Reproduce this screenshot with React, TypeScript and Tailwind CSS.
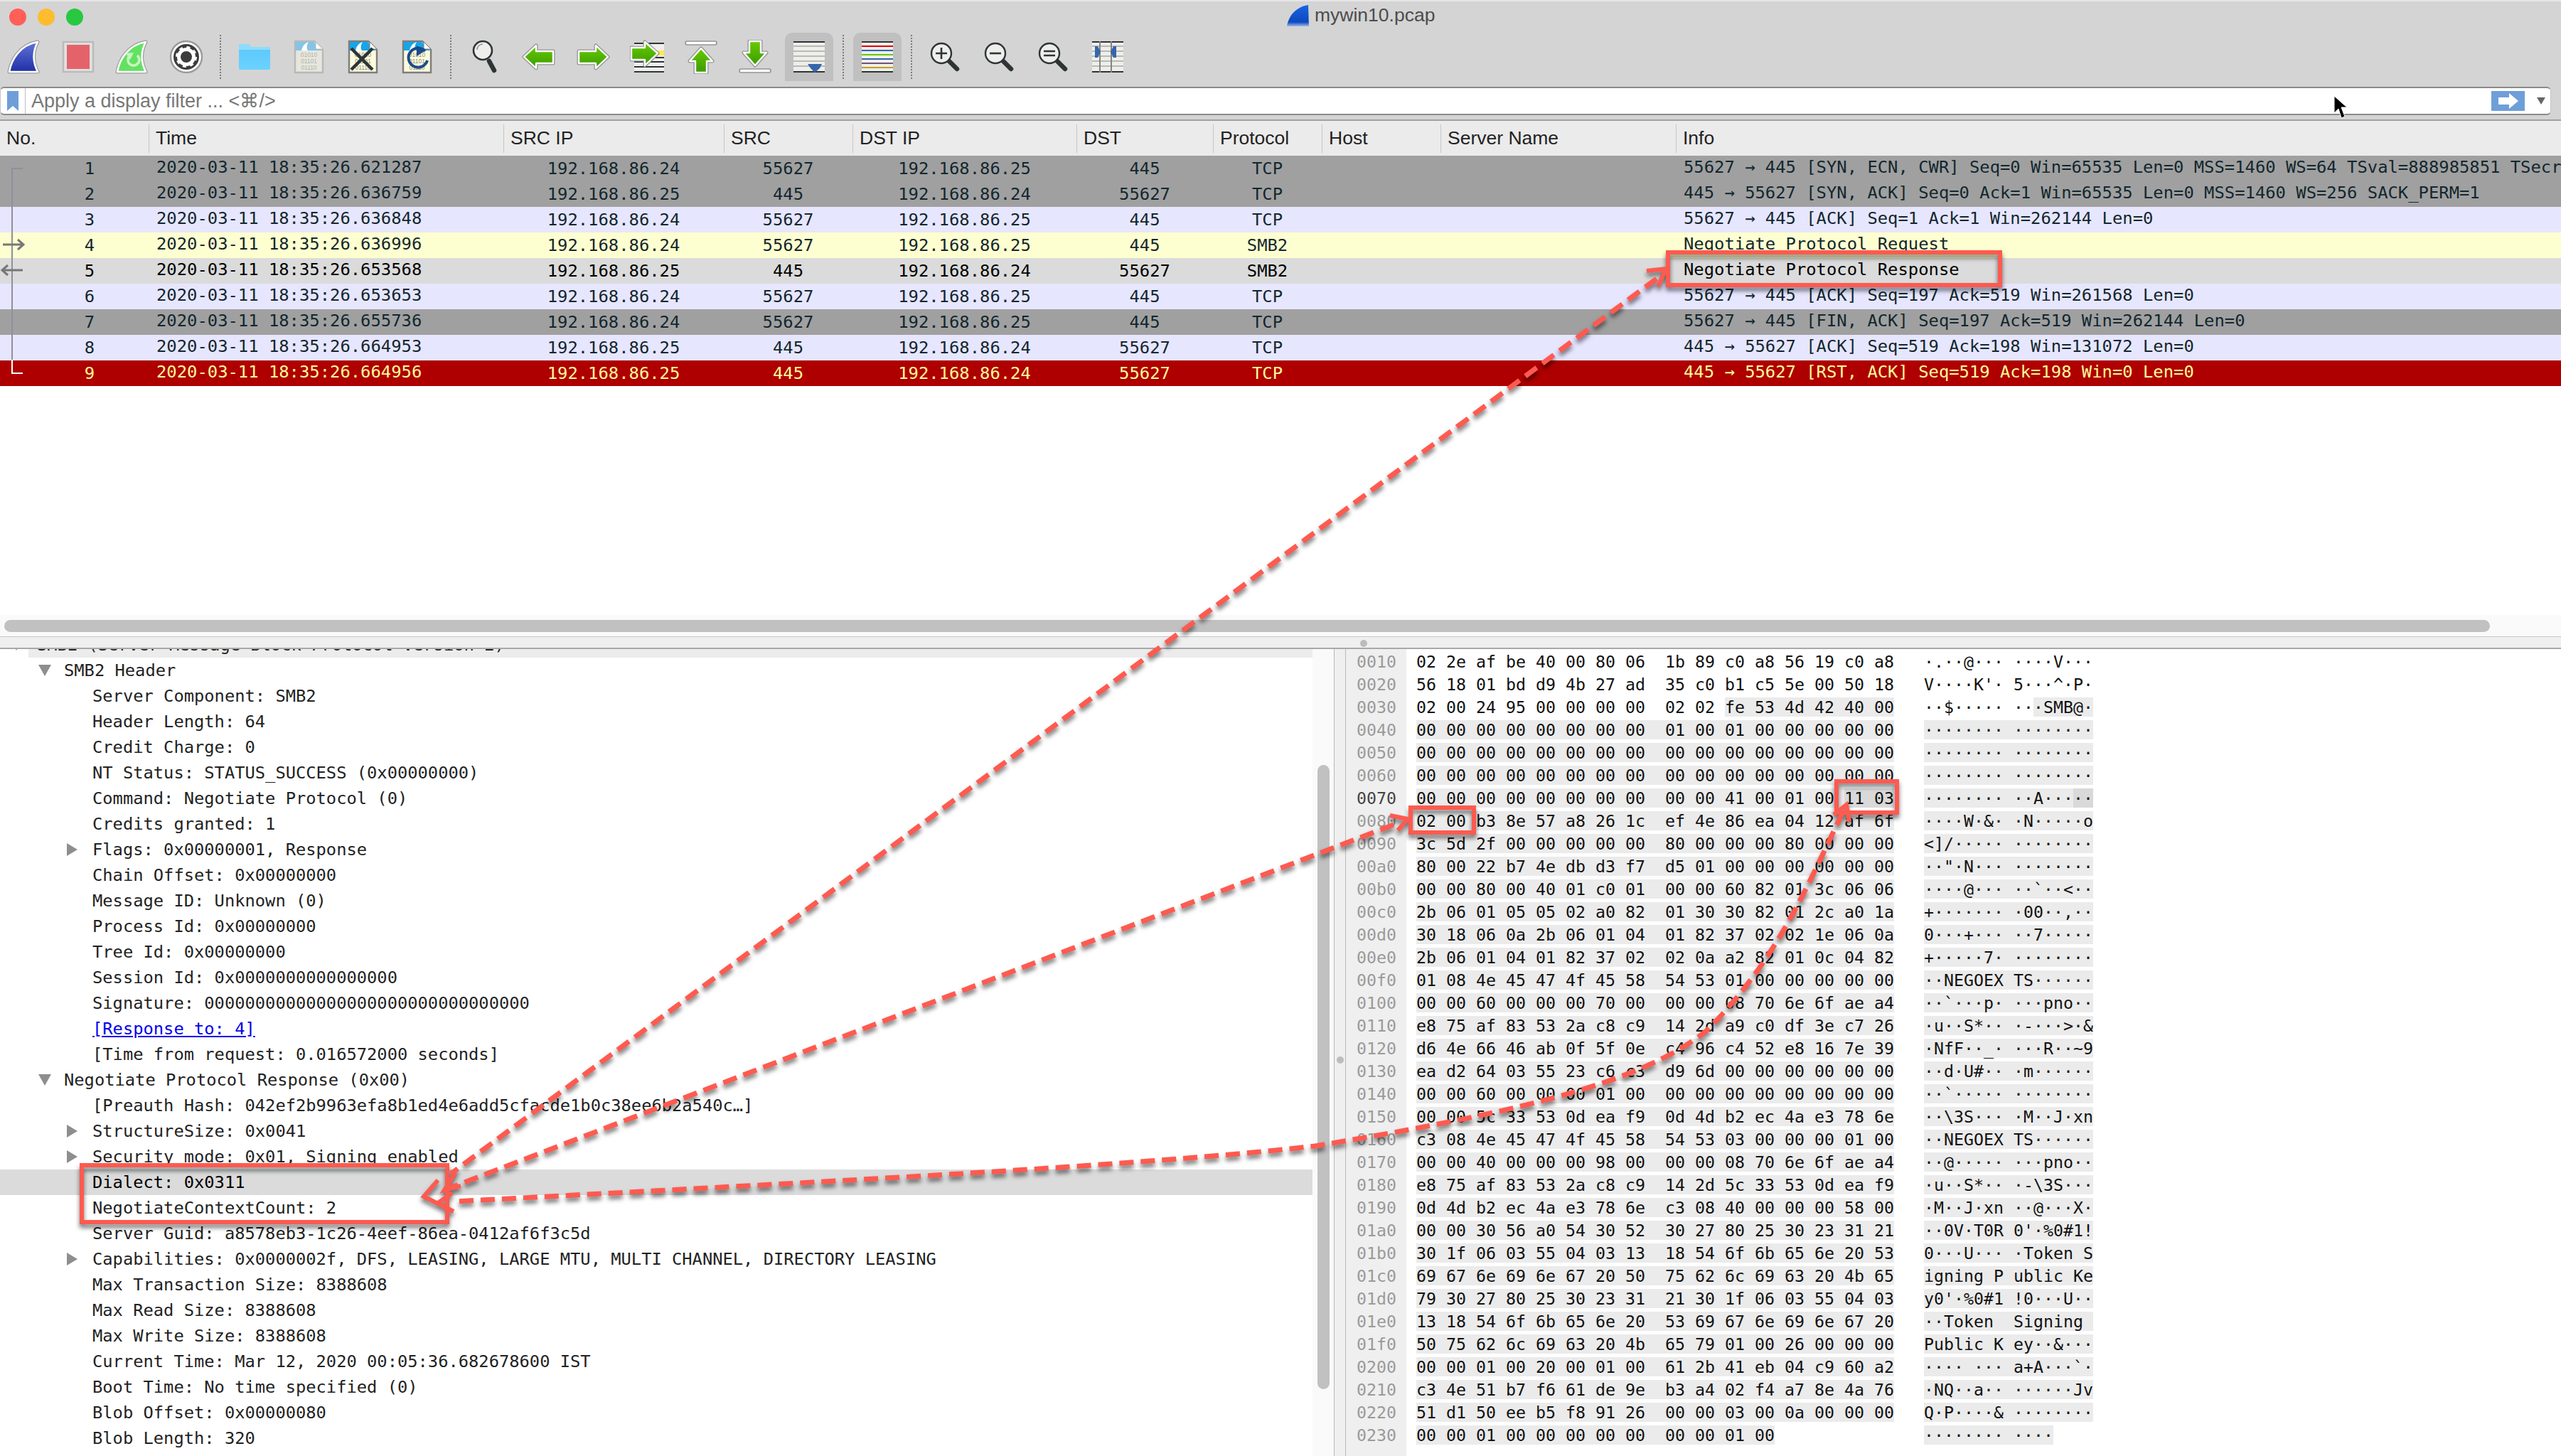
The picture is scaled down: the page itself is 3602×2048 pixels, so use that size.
import type { ReactNode } from "react";

const MONO = "[font-family:'DejaVu_Sans_Mono',monospace]";
const SANS = "[font-family:'Liberation_Sans',sans-serif]";
const COLS = "grid grid-cols-[209px_499px_310px_181px_315px_192px_153px_167px_331px_minmax(0,1fr)]";

const packets = [
  { no: 1, time: "2020-03-11 18:35:26.621287", src: "192.168.86.24", sp: "55627", dst: "192.168.86.25", dp: "445", proto: "TCP", info: "55627 → 445 [SYN, ECN, CWR] Seq=0 Win=65535 Len=0 MSS=1460 WS=64 TSval=888985851 TSecr=0 SACK_PERM=1", row: "bg-[#a0a0a0] text-[#12272e]" },
  { no: 2, time: "2020-03-11 18:35:26.636759", src: "192.168.86.25", sp: "445", dst: "192.168.86.24", dp: "55627", proto: "TCP", info: "445 → 55627 [SYN, ACK] Seq=0 Ack=1 Win=65535 Len=0 MSS=1460 WS=256 SACK_PERM=1", row: "bg-[#a0a0a0] text-[#12272e]" },
  { no: 3, time: "2020-03-11 18:35:26.636848", src: "192.168.86.24", sp: "55627", dst: "192.168.86.25", dp: "445", proto: "TCP", info: "55627 → 445 [ACK] Seq=1 Ack=1 Win=262144 Len=0", row: "bg-[#e7e6ff] text-[#12272e]" },
  { no: 4, time: "2020-03-11 18:35:26.636996", src: "192.168.86.24", sp: "55627", dst: "192.168.86.25", dp: "445", proto: "SMB2", info: "Negotiate Protocol Request", row: "bg-[#feffd0] text-[#12272e]" },
  { no: 5, time: "2020-03-11 18:35:26.653568", src: "192.168.86.25", sp: "445", dst: "192.168.86.24", dp: "55627", proto: "SMB2", info: "Negotiate Protocol Response", row: "bg-[#dbdbdb] text-black" },
  { no: 6, time: "2020-03-11 18:35:26.653653", src: "192.168.86.24", sp: "55627", dst: "192.168.86.25", dp: "445", proto: "TCP", info: "55627 → 445 [ACK] Seq=197 Ack=519 Win=261568 Len=0", row: "bg-[#e7e6ff] text-[#12272e]" },
  { no: 7, time: "2020-03-11 18:35:26.655736", src: "192.168.86.24", sp: "55627", dst: "192.168.86.25", dp: "445", proto: "TCP", info: "55627 → 445 [FIN, ACK] Seq=197 Ack=519 Win=262144 Len=0", row: "bg-[#a0a0a0] text-[#12272e]" },
  { no: 8, time: "2020-03-11 18:35:26.664953", src: "192.168.86.25", sp: "445", dst: "192.168.86.24", dp: "55627", proto: "TCP", info: "445 → 55627 [ACK] Seq=519 Ack=198 Win=131072 Len=0", row: "bg-[#e7e6ff] text-[#12272e]" },
  { no: 9, time: "2020-03-11 18:35:26.664956", src: "192.168.86.25", sp: "445", dst: "192.168.86.24", dp: "55627", proto: "TCP", info: "445 → 55627 [RST, ACK] Seq=519 Ack=198 Win=0 Len=0", row: "bg-[#ae0000] text-[#fffc9c]" },
];

// level: 0 = 90px text, 1 = 130px text
const tree: { text: string; level: number; caret?: "down" | "right"; link?: boolean; selected?: boolean }[] = [
  { text: "SMB2 Header", level: 0, caret: "down" },
  { text: "Server Component: SMB2", level: 1 },
  { text: "Header Length: 64", level: 1 },
  { text: "Credit Charge: 0", level: 1 },
  { text: "NT Status: STATUS_SUCCESS (0x00000000)", level: 1 },
  { text: "Command: Negotiate Protocol (0)", level: 1 },
  { text: "Credits granted: 1", level: 1 },
  { text: "Flags: 0x00000001, Response", level: 1, caret: "right" },
  { text: "Chain Offset: 0x00000000", level: 1 },
  { text: "Message ID: Unknown (0)", level: 1 },
  { text: "Process Id: 0x00000000", level: 1 },
  { text: "Tree Id: 0x00000000", level: 1 },
  { text: "Session Id: 0x0000000000000000", level: 1 },
  { text: "Signature: 00000000000000000000000000000000", level: 1 },
  { text: "[Response to: 4]", level: 1, link: true },
  { text: "[Time from request: 0.016572000 seconds]", level: 1 },
  { text: "Negotiate Protocol Response (0x00)", level: 0, caret: "down" },
  { text: "[Preauth Hash: 042ef2b9963efa8b1ed4e6add5cfacde1b0c38ee6b2a540c…]", level: 1 },
  { text: "StructureSize: 0x0041", level: 1, caret: "right" },
  { text: "Security mode: 0x01, Signing enabled", level: 1, caret: "right" },
  { text: "Dialect: 0x0311", level: 1, selected: true },
  { text: "NegotiateContextCount: 2", level: 1 },
  { text: "Server Guid: a8578eb3-1c26-4eef-86ea-0412af6f3c5d", level: 1 },
  { text: "Capabilities: 0x0000002f, DFS, LEASING, LARGE MTU, MULTI CHANNEL, DIRECTORY LEASING", level: 1, caret: "right" },
  { text: "Max Transaction Size: 8388608", level: 1 },
  { text: "Max Read Size: 8388608", level: 1 },
  { text: "Max Write Size: 8388608", level: 1 },
  { text: "Current Time: Mar 12, 2020 00:05:36.682678600 IST", level: 1 },
  { text: "Boot Time: No time specified (0)", level: 1 },
  { text: "Blob Offset: 0x00000080", level: 1 },
  { text: "Blob Length: 320", level: 1 },
];

const hexDump = [
  "02 2e af be 40 00 80 06 1b 89 c0 a8 56 19 c0 a8",
  "56 18 01 bd d9 4b 27 ad 35 c0 b1 c5 5e 00 50 18",
  "02 00 24 95 00 00 00 00 02 02 fe 53 4d 42 40 00",
  "00 00 00 00 00 00 00 00 01 00 01 00 00 00 00 00",
  "00 00 00 00 00 00 00 00 00 00 00 00 00 00 00 00",
  "00 00 00 00 00 00 00 00 00 00 00 00 00 00 00 00",
  "00 00 00 00 00 00 00 00 00 00 41 00 01 00 11 03",
  "02 00 b3 8e 57 a8 26 1c ef 4e 86 ea 04 12 af 6f",
  "3c 5d 2f 00 00 00 00 00 80 00 00 00 80 00 00 00",
  "80 00 22 b7 4e db d3 f7 d5 01 00 00 00 00 00 00",
  "00 00 80 00 40 01 c0 01 00 00 60 82 01 3c 06 06",
  "2b 06 01 05 05 02 a0 82 01 30 30 82 01 2c a0 1a",
  "30 18 06 0a 2b 06 01 04 01 82 37 02 02 1e 06 0a",
  "2b 06 01 04 01 82 37 02 02 0a a2 82 01 0c 04 82",
  "01 08 4e 45 47 4f 45 58 54 53 01 00 00 00 00 00",
  "00 00 60 00 00 00 70 00 00 00 08 70 6e 6f ae a4",
  "e8 75 af 83 53 2a c8 c9 14 2d a9 c0 df 3e c7 26",
  "d6 4e 66 46 ab 0f 5f 0e c4 96 c4 52 e8 16 7e 39",
  "ea d2 64 03 55 23 c6 c3 d9 6d 00 00 00 00 00 00",
  "00 00 60 00 00 00 01 00 00 00 00 00 00 00 00 00",
  "00 00 5c 33 53 0d ea f9 0d 4d b2 ec 4a e3 78 6e",
  "c3 08 4e 45 47 4f 45 58 54 53 03 00 00 00 01 00",
  "00 00 40 00 00 00 98 00 00 00 08 70 6e 6f ae a4",
  "e8 75 af 83 53 2a c8 c9 14 2d 5c 33 53 0d ea f9",
  "0d 4d b2 ec 4a e3 78 6e c3 08 40 00 00 00 58 00",
  "00 00 30 56 a0 54 30 52 30 27 80 25 30 23 31 21",
  "30 1f 06 03 55 04 03 13 18 54 6f 6b 65 6e 20 53",
  "69 67 6e 69 6e 67 20 50 75 62 6c 69 63 20 4b 65",
  "79 30 27 80 25 30 23 31 21 30 1f 06 03 55 04 03",
  "13 18 54 6f 6b 65 6e 20 53 69 67 6e 69 6e 67 20",
  "50 75 62 6c 69 63 20 4b 65 79 01 00 26 00 00 00",
  "00 00 01 00 20 00 01 00 61 2b 41 eb 04 c9 60 a2",
  "c3 4e 51 b7 f6 61 de 9e b3 a4 02 f4 a7 8e 4a 76",
  "51 d1 50 ee b5 f8 91 26 00 00 03 00 0a 00 00 00",
  "00 00 01 00 00 00 00 00 00 00 01 00",
];

const tones: Record<string, string> = { none: "", field: "bg-[#ebebeb]", sel: "bg-[#d9d9d9]" };

// merge neighbouring bytes of the same tone into one span
function runs(pieces: string[], tone: (i: number) => string) {
  const out: ReactNode[] = [];
  let buf = "";
  let cur = tone(0);
  pieces.forEach((p, i) => {
    const t = tone(i);
    if (t !== cur) {
      out.push(<span key={i} className={tones[cur]}>{buf}</span>);
      buf = "";
      cur = t;
    }
    buf += p;
  });
  out.push(<span key="end" className={tones[cur]}>{buf}</span>);
  return out;
}

function HexRow({ line, index }: { line: string; index: number }) {
  const base = (index + 1) * 16;
  const bytes = line.split(" ");
  const tone = (i: number) => {
    const addr = base + i;
    if (addr === 0x7e || addr === 0x7f) return "sel";
    return addr >= 0x3a ? "field" : "none";
  };
  const hex = bytes.map((b, i) => (i === bytes.length - 1 ? b : i === 7 ? b + "  " : b + " "));
  const ascii = bytes.map((b, i) => {
    const c = parseInt(b, 16);
    const ch = c >= 32 && c < 127 ? String.fromCharCode(c) : "·";
    return i === 7 ? ch + " " : ch;
  });
  const selected = base === 0x70;
  return (
    <div className={`flex h-[32px] leading-[32px] whitespace-pre text-[23.26px] text-[#111] ${MONO}`}>
      <div className={`w-[85px] pl-[15px] bg-[#efefef] ${selected ? "text-[#444]" : "text-[#9a9a9a]"}`}>
        {base.toString(16).padStart(4, "0")}
      </div>
      <div className="pl-[14px] w-[728px]">{runs(hex, tone)}</div>
      <div>{runs(ascii, tone)}</div>
    </div>
  );
}

function Caret({ dir, className }: { dir: "down" | "right"; className: string }) {
  return dir === "down" ? (
    <svg width="18" height="16" viewBox="0 0 18 16" className={className}>
      <polygon points="0,0 18,0 9,16" fill="#8e8e8e" />
    </svg>
  ) : (
    <svg width="15" height="18" viewBox="0 0 15 18" className={className}>
      <polygon points="0,0 15,9 0,18" fill="#8e8e8e" />
    </svg>
  );
}

function TreeRow({ text, level, caret, link, selected }: (typeof tree)[number]) {
  const caretPos = level === 0 ? "left-[54px] top-[10px]" : "left-[94px] top-[9px]";
  return (
    <div className={`relative h-[36px] leading-[36px] whitespace-nowrap text-[23.75px] ${MONO} ${selected ? "bg-[#dbdbdb] text-black" : "text-[#222]"} ${level === 0 ? "pl-[90px]" : "pl-[130px]"}`}>
      {caret && <Caret dir={caret} className={`absolute ${caretPos}`} />}
      {link ? <span className="text-[#0000ee] underline">{text}</span> : text}
    </div>
  );
}

/* ---------- toolbar icons, all on a 48 box ---------- */

const FIN = "M3 45 C6 28 18 7 43 3 C35 18 37 33 43 45 Z";

function Icon({ children }: { children: ReactNode }) {
  return (
    <svg width="48" height="48" viewBox="0 0 48 48" className="shrink-0">
      {children}
    </svg>
  );
}

function Defs() {
  return (
    <svg width="0" height="0" className="absolute">
      <defs>
        <linearGradient id="finBlue" x1="0" y1="0" x2="0" y2="1">
          <stop offset="0" stopColor="#6274d6" />
          <stop offset="1" stopColor="#1f2fa6" />
        </linearGradient>
        <linearGradient id="titleFin" x1="0" y1="0" x2="0" y2="1">
          <stop offset="0" stopColor="#1b63e0" />
          <stop offset="0.8" stopColor="#0d49c0" />
          <stop offset="1" stopColor="#9db8e8" />
        </linearGradient>
        <linearGradient id="arrowGreen" x1="0" y1="0" x2="0" y2="1">
          <stop offset="0" stopColor="#66cc00" />
          <stop offset="1" stopColor="#3c9a00" />
        </linearGradient>
        <linearGradient id="folderBlue" x1="0" y1="0" x2="0" y2="1">
          <stop offset="0" stopColor="#5bc8fb" />
          <stop offset="1" stopColor="#6ad2ff" />
        </linearGradient>
      </defs>
    </svg>
  );
}

function FinIcon({ fill }: { fill: string }) {
  return (
    <>
      <path d={FIN} fill="none" stroke="#9b9b9b" strokeWidth="5" strokeLinejoin="round" />
      <path d={FIN} fill={fill} stroke="#fff" strokeWidth="2.6" strokeLinejoin="round" />
    </>
  );
}

function Shield({ d, fill = "url(#arrowGreen)" }: { d: string; fill?: string }) {
  return (
    <>
      <path d={d} fill="none" stroke="#949494" strokeWidth="5" strokeLinejoin="round" />
      <path d={d} fill={fill} stroke="#fff" strokeWidth="2.4" strokeLinejoin="round" />
    </>
  );
}

function FileBase({ faded }: { faded?: boolean }) {
  const band = faded ? "#84c4e6" : "#16a5e8";
  const body = faded ? "#e6e6dc" : "#fbfbdc";
  const border = faded ? "#b8b8b8" : "#7d7d7d";
  const digit = faded ? "#b4b4b0" : "#8e8e80";
  return (
    <>
      <path d="M5 2 H32 L44 14 V46 H5 Z" fill={body} stroke={border} strokeWidth="2.4" />
      <path d="M6 3 H31 L43 15 H6 Z" fill={band} />
      <path d="M34 3 L44 13 H34 Z" fill="#fff" stroke={border} strokeWidth="1" />
      <path d="M14 15 C15 10 18 5 24 3 C21 8 21 12 23 15 Z" fill="#fff" />
      <text x="24.5" y="24" textAnchor="middle" fontSize="8.4" fontFamily="Liberation Sans" fill={digit}>01010</text>
      <text x="24.5" y="33" textAnchor="middle" fontSize="8.4" fontFamily="Liberation Sans" fill={digit}>01101</text>
      <text x="24.5" y="42" textAnchor="middle" fontSize="8.4" fontFamily="Liberation Sans" fill={digit}>01110</text>
    </>
  );
}

function Lens({ children }: { children?: ReactNode }) {
  return (
    <>
      <path d="M29 30 L40 41" stroke="#2e3436" strokeWidth="6.5" strokeLinecap="round" />
      <circle cx="18" cy="19" r="14" fill="#eeeeec" stroke="#2e3436" strokeWidth="2.4" />
      {children}
    </>
  );
}

function Lines({ ys, color, x1 = 2, x2 = 46, width = 2 }: { ys: number[]; color: string; x1?: number; x2?: number; width?: number }) {
  return (
    <>
      {ys.map((y) => (
        <line key={y} x1={x1} x2={x2} y1={y} y2={y} stroke={color} strokeWidth={width} />
      ))}
    </>
  );
}

function Sep() {
  return <div className="-mx-[5px] h-[62px] w-[2px] shrink-0 border-l-2 border-dotted border-[#7a7a7a]" />;
}

function Toggled({ children }: { children: ReactNode }) {
  return <div className="-mx-[10px] flex h-[68px] shrink-0 items-center rounded-t-[10px] bg-[#c0c0c0] px-[10px]">{children}</div>;
}

function Toolbar() {
  return (
    <div className="flex h-[68px] items-center gap-[28px] pl-[10px]">
      <Icon><FinIcon fill="url(#finBlue)" /></Icon>
      <Icon>
        <rect x="3" y="3" width="42" height="42" fill="#e0e0e0" stroke="#bababa" strokeWidth="2.4" />
        <rect x="8" y="7" width="32" height="34" fill="#e4636a" />
      </Icon>
      <Icon>
        <FinIcon fill="#62e262" />
        <path d="M31 22 A8 8 0 1 1 19 24" fill="none" stroke="#c8f4c0" strokeWidth="3.6" />
        <polygon points="15,19 26,18 21,28" fill="#c8f4c0" />
      </Icon>
      <Icon>
        <circle cx="24" cy="24" r="22" fill="#fff" stroke="#9a9a9a" strokeWidth="2.4" />
        <circle cx="24" cy="24" r="18" fill="#3c3c3c" />
        <circle cx="24" cy="24" r="10.5" fill="none" stroke="#fff" strokeWidth="5" />
        <circle cx="24" cy="24" r="13.5" fill="none" stroke="#fff" strokeWidth="3" strokeDasharray="5 5.6" />
      </Icon>
      <Sep />
      <Icon>
        <path d="M2 8 Q2 6 4 6 H15 L19 10 H44 Q46 10 46 12 V40 Q46 42 44 42 H4 Q2 42 2 40 Z" fill="url(#folderBlue)" />
        <path d="M2 8 Q2 6 4 6 H15 L19 10 H46 V14 H2 Z" fill="#8edcfd" />
      </Icon>
      <Icon><FileBase faded /></Icon>
      <Icon>
        <FileBase />
        <path d="M8 12 L38 42 M38 12 L8 42" stroke="#2e3436" strokeWidth="4.5" />
      </Icon>
      <Icon>
        <FileBase />
        <path d="M36 14 A13.5 13.5 0 1 0 39 27" fill="none" stroke="#1c4a8c" strokeWidth="4" transform="translate(0 2)" />
        <polygon points="24,8 35,16 24,23" fill="#1c4a8c" />
      </Icon>
      <Sep />
      <Icon>
        <path d="M30 30 L37 43" stroke="#2e3436" strokeWidth="6.5" strokeLinecap="round" />
        <circle cx="21" cy="15" r="13" fill="#eeeeec" stroke="#2e3436" strokeWidth="2.6" />
        <path d="M13 14 A8 8 0 0 1 21 6" fill="none" stroke="#8f8f8f" strokeWidth="1.5" />
      </Icon>
      <Icon><Shield d="M3 24 L20 8 V16 H44 V33 H20 V40 Z" /></Icon>
      <Icon><Shield d="M45 24 L28 8 V16 H4 V33 H28 V40 Z" /></Icon>
      <Icon>
        <rect x="6" y="4" width="42" height="42" fill="#eeeeec" />
        <Lines ys={[5, 45, 38, 31, 25]} color="#2e3436" x1={6} x2={48} />
        <rect x="36" y="15" width="12" height="7" fill="#fce94f" />
        <Shield d="M39 19 L21 3 V11 H2 V28 H21 V36 Z" />
      </Icon>
      <Icon>
        <rect x="2" y="2" width="44" height="5" rx="2.5" fill="#fff" stroke="#949494" strokeWidth="1.6" />
        <Shield d="M24 12 L40 30 H32 V46 H16 V30 H8 Z" />
      </Icon>
      <Icon>
        <rect x="2" y="41" width="44" height="5" rx="2.5" fill="#fff" stroke="#949494" strokeWidth="1.6" />
        <Shield d="M24 36 L40 18 H32 V2 H16 V18 H8 Z" />
      </Icon>
      <Toggled>
        <Icon>
          <rect x="2" y="2" width="44" height="44" fill="#eeeeec" />
          <Lines ys={[9, 16, 23, 30, 37]} color="#babab2" />
          <Lines ys={[3, 45]} color="#2e3436" />
          <polygon points="22,34 42,34 39,40 32,46 26,40" fill="#3466ab" />
        </Icon>
      </Toggled>
      <Sep />
      <Toggled>
        <Icon>
          <rect x="2" y="2" width="44" height="44" fill="#eeeeec" />
          <Lines ys={[3, 45]} color="#2e3436" />
          <Lines ys={[9]} color="#ef0000" />
          <Lines ys={[15, 27]} color="#3466ab" />
          <Lines ys={[21]} color="#66cc00" />
          <Lines ys={[33]} color="#75507b" />
          <Lines ys={[39]} color="#c4a000" />
        </Icon>
      </Toggled>
      <Sep />
      <Icon>
        <Lens>
          <path d="M10 19 H26 M18 11 V27" stroke="#2e3436" strokeWidth="2.6" />
        </Lens>
      </Icon>
      <Icon>
        <Lens>
          <path d="M10 19 H26" stroke="#2e3436" strokeWidth="2.6" />
        </Lens>
      </Icon>
      <Icon>
        <Lens>
          <path d="M10 16 H26 M10 22 H26" stroke="#2e3436" strokeWidth="2.6" />
        </Lens>
      </Icon>
      <Icon>
        <rect x="2" y="2" width="44" height="44" fill="#eeeeec" />
        <Lines ys={[9, 16, 23, 30, 37]} color="#babab2" />
        <Lines ys={[3, 45]} color="#2e3436" />
        <path d="M13 2 V46 M29 2 V46" stroke="#85857d" strokeWidth="2" />
        <polygon points="6,9 10,9 14,17 10,25 6,25" fill="#3466ab" />
        <polygon points="36,9 32,9 28,17 32,25 36,25" fill="#3466ab" />
      </Icon>
    </div>
  );
}

function Cell({ children, className = "" }: { children: ReactNode; className?: string }) {
  return <div className={`overflow-hidden whitespace-nowrap ${className}`}>{children}</div>;
}

function HeaderCell({ label, first }: { label: string; first?: boolean }) {
  return (
    <div className={`flex h-[40px] items-center pl-[9px] ${first ? "" : "border-l border-[#c6c6c6]"}`}>{label}</div>
  );
}

function PacketList() {
  return (
    <div className={`h-[646px] bg-white text-[23.85px] leading-[36px] ${MONO}`}>
      {packets.map((p) => (
        <div key={p.no} className={`${COLS} h-[36px] ${p.row}`}>
          <Cell className="pr-[76px] text-right">{p.no}</Cell>
          <Cell className="-translate-y-[2px] pl-[11px]">{p.time}</Cell>
          <Cell className="text-center">{p.src}</Cell>
          <Cell className="text-center">{p.sp}</Cell>
          <Cell className="text-center">{p.dst}</Cell>
          <Cell className="text-center">{p.dp}</Cell>
          <Cell className="text-center">{p.proto}</Cell>
          <Cell>{""}</Cell>
          <Cell>{""}</Cell>
          <Cell className="-translate-y-[2px] pl-[11px]">{p.info}</Cell>
        </div>
      ))}
    </div>
  );
}

function Annotations() {
  const red = "#ff5a50";
  return (
    <>
      {/* related packet marks in the first column */}
      <svg width="40" height="560" viewBox="0 0 40 560" className="absolute left-0 top-0 pointer-events-none">
        <g fill="none" stroke="#8f8f9f" strokeWidth="2">
          <path d="M32 237 H17 V506" />
          <path d="M4 344 H32 M25 337 L33 344 L25 351" strokeWidth="3" stroke="#777" />
          <path d="M32 380 H4 M11 373 L3 380 L11 387" strokeWidth="3" stroke="#777" />
        </g>
        <path d="M17 506 V525 H32" fill="none" stroke="#fff" strokeWidth="2" />
      </svg>
      <svg width="3602" height="2048" viewBox="0 0 3602 2048" className="absolute left-0 top-0 pointer-events-none [filter:drop-shadow(0_5px_3px_rgba(0,0,0,0.55))]">
        <g fill="none" stroke={red} strokeWidth="6">
          <rect x="2346" y="355" width="467" height="46" />
          <rect x="115" y="1639" width="514" height="80" />
          <rect x="1984" y="1136" width="89" height="35" />
          <rect x="2583" y="1099" width="85" height="44" />
          <g strokeDasharray="20 10" strokeWidth="7">
            <path d="M2330 392 L634 1651" />
            <path d="M1960 1160 L625 1674" />
            <path d="M2592 1142 C2540 1250 2500 1350 2400 1450 C2300 1530 2100 1570 1850 1612 C1600 1640 1200 1660 640 1690" />
          </g>
          <path d="M2316 381 L2343 378 L2332 403" />
          <path d="M1955 1147 L1980 1152 L1966 1168" />
          <path d="M2579 1146 L2597 1132 L2601 1156" />
          <path d="M616 1660 L596 1683 L638 1704" />
          <path d="M640 1650 L625 1674 L648 1668" />
          <path d="M636 1678 L616 1692 L636 1704" />
        </g>
      </svg>
      {/* mouse pointer */}
      <svg width="24" height="36" viewBox="0 0 24 36" className="absolute left-[3280px] top-[133px] pointer-events-none">
        <polygon points="3,2 3,26 9,20 13,33 18,31 13,18 21,18" fill="#000" stroke="#fff" strokeWidth="1" />
      </svg>
    </>
  );
}

export default function App() {
  return (
    <div className={`relative h-[2048px] w-[3602px] overflow-hidden bg-[#d4d4d4] ${SANS}`}>
      <Defs />
      <div className="flex h-[46px] items-center border-t-2 border-[#e6e6e6] pl-[13px]">
        <div className="flex gap-[16px]">
          <div className="h-[24px] w-[24px] rounded-full bg-[#ff5f57]" />
          <div className="h-[24px] w-[24px] rounded-full bg-[#febc2e]" />
          <div className="h-[24px] w-[24px] rounded-full bg-[#28c840]" />
        </div>
        <svg width="34" height="32" viewBox="0 0 34 32" className="ml-[1692px] -translate-y-[2px]">
          <path d="M1 31 C3 18 12 4 31 1 L32 31 Z" fill="url(#titleFin)" />
        </svg>
        <span className="ml-[6px] -translate-y-[2px] text-[26.5px] text-[#4c4c4c]">mywin10.pcap</span>
      </div>
      <Toolbar />
      <div className="pt-[8px]">
        <div className="flex h-[40px] w-[3588px] items-center rounded-r-[6px] rounded-l-[6px] border-x border-y-2 border-x-[#c4c4c4] border-y-[#8a8a8a] bg-white">
          <svg width="16" height="28" viewBox="0 0 16 28" className="ml-[9px] shrink-0">
            <path d="M0 0 H16 V28 L8 21 L0 28 Z" fill="#6f9fd8" />
          </svg>
          <div className="ml-[9px] h-full w-px bg-[#bdbdbd]" />
          <span className="ml-[8px] text-[27px] text-[#777]">Apply a display filter ... &lt;⌘/&gt;</span>
          <div className="ml-auto flex h-[28px] w-[47px] items-center justify-center bg-[#6f9fd8]">
            <svg width="32" height="24" viewBox="0 0 32 24">
              <path d="M2 7 H17 V1 L30 12 L17 23 V17 H2 Z" fill="#fff" />
            </svg>
          </div>
          <svg width="12" height="12" viewBox="0 0 12 12" className="ml-[17px] mr-[7px]">
            <polygon points="0,1 12,1 6,11" fill="#666" />
          </svg>
        </div>
      </div>
      <div className="h-[6px]" />
      <div className={`${COLS} h-[51px] items-center border-t-2 border-[#a0a0a0] bg-[#ebebeb] text-[26.5px] text-[#222]`}>
        <HeaderCell label="No." first />
        <HeaderCell label="Time" />
        <HeaderCell label="SRC IP" />
        <HeaderCell label="SRC" />
        <HeaderCell label="DST IP" />
        <HeaderCell label="DST" />
        <HeaderCell label="Protocol" />
        <HeaderCell label="Host" />
        <HeaderCell label="Server Name" />
        <HeaderCell label="Info" />
      </div>
      <PacketList />
      <div className="flex h-[30px] items-center bg-[#fafafa] pl-[6px]">
        <div className="h-[17px] w-[3496px] rounded-full bg-[#c1c1c1]" />
      </div>
      <div className="h-[16px] border-t border-[#c8c8c8] bg-[#efefef] pl-[1913px] pt-[4px]">
        <div className="h-[10px] w-[10px] rounded-full bg-[#bcbcbc]" />
      </div>
      <div className="flex h-[1138px] border-t-2 border-[#a8a8a8] bg-white">
        <div className="h-full w-[1846px] overflow-hidden">
          <div className="-mt-[24px]">
            <div className={`relative ml-[40px] h-[36px] bg-[#ececec] pl-[12px] text-[23.75px] leading-[36px] whitespace-nowrap text-[#222] ${MONO}`}>
              SMB2 (Server Message Block Protocol version 2)
              <Caret dir="down" className="absolute -left-[26px] top-[10px]" />
            </div>
            {tree.map((r) => (
              <TreeRow key={r.text} {...r} />
            ))}
          </div>
        </div>
        <div className="h-full w-[30px] bg-[#fafafa] pl-[7px] pt-[163px]">
          <div className="h-[878px] w-[17px] rounded-full bg-[#c1c1c1]" />
        </div>
        <div className="h-full w-[17px] border-x border-[#b8b8b8] bg-[#efefef] pl-[3px] pt-[573px]">
          <div className="h-[10px] w-[10px] rounded-full bg-[#bcbcbc]" />
        </div>
        <div className="flex h-full min-w-0 flex-1 flex-col">
          <div className="h-[2px] w-[85px] bg-[#efefef]" />
          {hexDump.map((line, i) => (
            <HexRow key={i} line={line} index={i} />
          ))}
          <div className="w-[85px] flex-1 bg-[#efefef]" />
        </div>
      </div>
      <Annotations />
    </div>
  );
}
